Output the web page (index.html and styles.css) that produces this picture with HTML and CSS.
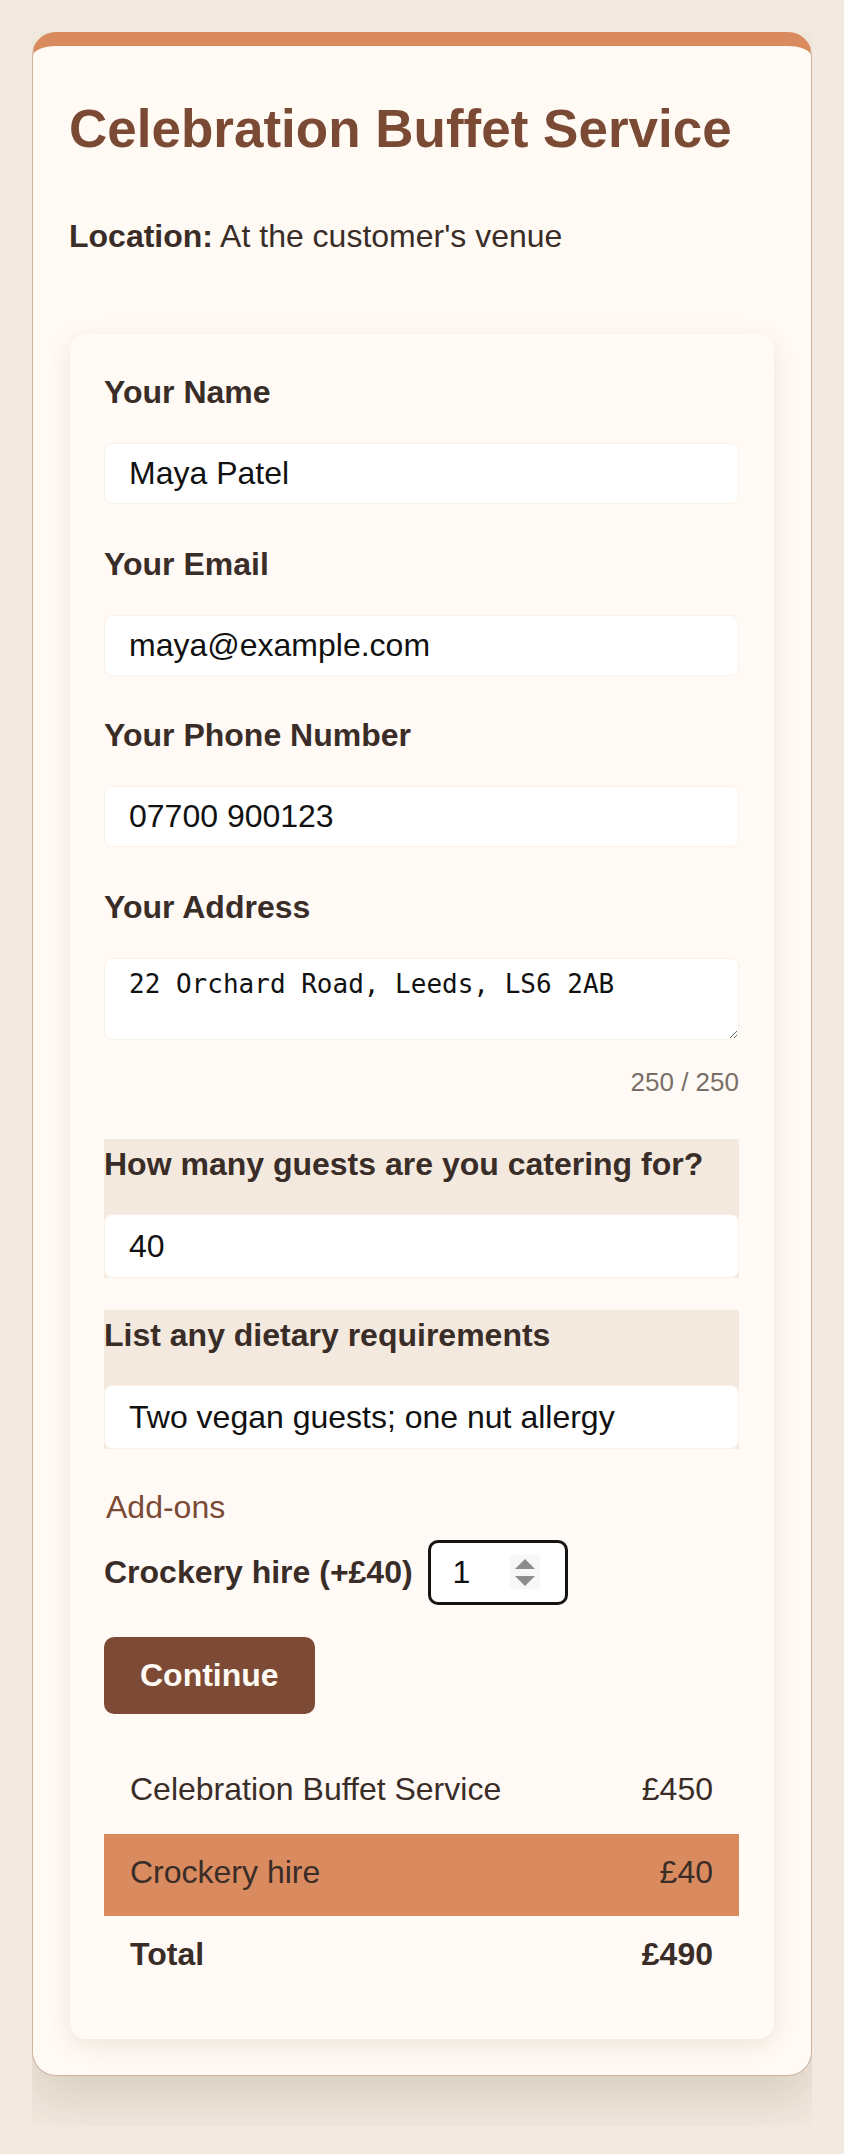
FILE: index.html
```html
<!DOCTYPE html>
<html lang="en">
<head>
    <meta charset="UTF-8">
    <title>Celebration Buffet Service | Booking</title>
    <link rel="stylesheet" href="styles.css">
</head>
<body>

    <div class="wrap">
        <main class="card">
            <h1>Celebration Buffet Service</h1>
            <p class="location"><strong>Location:</strong> At the customer's venue</p>

            <!-- Booking form -->
            <form class="booking">
                <div class="field">
                    <label for="name">Your Name</label>
                    <input id="name" type="text" value="Maya Patel">
                </div>
                <div class="field">
                    <label for="email">Your Email</label>
                    <input id="email" type="email" value="maya@example.com">
                </div>
                <div class="field">
                    <label for="phone">Your Phone Number</label>
                    <input id="phone" type="tel" value="07700 900123">
                </div>
                <div class="field">
                    <label for="address">Your Address</label>
                    <textarea id="address" rows="2" maxlength="250">22 Orchard Road, Leeds, LS6 2AB</textarea>
                    <div class="counter">250 / 250</div>
                </div>

                <!-- Service questions -->
                <div class="field custom">
                    <label for="guests">How many guests are you catering for?</label>
                    <input id="guests" type="text" value="40">
                </div>
                <div class="field custom">
                    <label for="dietary">List any dietary requirements</label>
                    <input id="dietary" type="text" value="Two vegan guests; one nut allergy">
                </div>

                <fieldset class="addons">
                    <legend>Add-ons</legend>
                    <div class="addon">
                        <label for="crockery">Crockery hire (+£40)</label>
                        <div class="qty">
                            <input id="crockery" type="number" value="1" min="0">
                            <svg width="30" height="34" viewBox="0 0 30 34" aria-hidden="true">
                                <rect width="30" height="34" fill="#f7f7f6"/>
                                <polygon points="15,4 25,14 5,14" fill="#8c8c8c"/>
                                <polygon points="5,21 25,21 15,31" fill="#8c8c8c"/>
                            </svg>
                        </div>
                    </div>
                </fieldset>

                <button type="button" class="continue">Continue</button>

                <!-- Price summary -->
                <table class="summary">
                    <tr>
                        <td>Celebration Buffet Service</td>
                        <td>£450</td>
                    </tr>
                    <tr class="extra">
                        <td>Crockery hire</td>
                        <td>£40</td>
                    </tr>
                    <tr class="total">
                        <td>Total</td>
                        <td>£490</td>
                    </tr>
                </table>
            </form>
        </main>
    </div>

</body>
</html>
```

FILE: styles.css
```css
/* General */
* {
    box-sizing: border-box;
}

body {
    margin: 0;
    padding: 32px;
    background: #f2eae0;
    font-family: "Liberation Sans", Arial, sans-serif;
    font-size: 32px;
    color: #3a2d28;
}

.wrap {
    overflow: hidden;
    padding-bottom: 50px;
}

/* Main card */
.card {
    display: block;
    background: #fffaf4;
    border: 1px solid #ccb4a2;
    border-top: 14px solid #d98b5f;
    border-radius: 24px;
    padding: 52px 36px 36px;
    box-shadow: 0 24px 48px rgba(90, 60, 30, 0.16);
}

h1 {
    margin: 0 0 59px;
    font-size: 53px;
    color: #7b4a35;
}

.location {
    margin: 0 0 79px;
}

/* Form panel */
.booking {
    margin: 0 1px;
    padding: 40px 35px 40px 34px;
    background: #fffaf5;
    border-radius: 16px;
    box-shadow: 0 6px 24px rgba(110, 70, 40, 0.12);
}

.field {
    margin-bottom: 41.5px;
}

.field label {
    display: block;
    margin-bottom: 32px;
    font-weight: bold;
}

.field input,
.field textarea {
    display: block;
    width: 100%;
    padding: 11px 24px;
    border: 1px solid #fbf1e6;
    border-radius: 8px;
    background: #fff;
    font: inherit;
    color: #111;
}

.field textarea {
    padding: 10px 24px;
    font-family: "DejaVu Sans Mono", monospace;
    font-size: 26px;
}

.counter {
    margin-top: 27px;
    text-align: right;
    font-size: 26px;
    color: #7a6e68;
}

/* Service questions */
.field.custom {
    margin-bottom: 32px;
    padding-top: 7px;
    background: #f3e9df;
}

.field.custom label {
    margin-bottom: 31px;
}

.field.custom input {
    padding: 13px 24px 12px;
}

/* Add-ons */
.addons {
    margin: 39.5px 0 0;
    padding: 0;
    border: 0;
    min-width: 0;
}

.addons legend {
    color: #7b4a35;
}

.addon {
    display: flex;
    align-items: center;
    gap: 15px;
    margin-top: 14px;
}

.addon label {
    font-weight: bold;
}

.qty {
    display: flex;
    align-items: center;
    width: 140px;
    height: 65px;
    padding: 0 25px 0 22px;
    border: 3px solid #161310;
    border-radius: 10px;
    background: #fff;
}

.qty input {
    flex: 1;
    width: 0;
    padding: 0;
    border: 0;
    outline: none;
    background: transparent;
    font: inherit;
    color: #111;
    -moz-appearance: textfield;
}

.qty input::-webkit-inner-spin-button,
.qty input::-webkit-outer-spin-button {
    -webkit-appearance: none;
    margin: 0;
}

.continue {
    display: block;
    margin-top: 32px;
    padding: 20px 36px;
    border: 0;
    border-radius: 10px;
    background: #7d4a36;
    color: #fffaf3;
    font: inherit;
    font-weight: bold;
    cursor: pointer;
}

/* Summary */
.summary {
    width: 100%;
    margin-top: 37.5px;
    border-collapse: collapse;
}

.summary td {
    padding: 20px 26px 25.5px;
}

.summary .extra {
    background: #d98b5f;
}

.summary td:last-child {
    text-align: right;
}

.summary .total {
    font-weight: bold;
}
```
